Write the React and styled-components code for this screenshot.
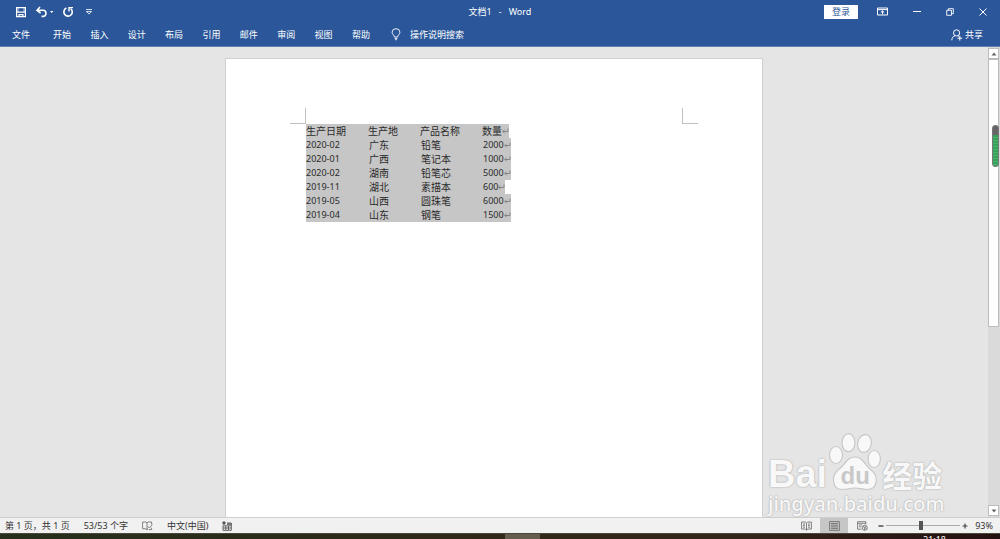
import { useState } from "react"
import styled, { createGlobalStyle } from "styled-components"

const GlobalStyle = createGlobalStyle`
    * {
        box-sizing: border-box;
    }
    body {
        margin: 0;
        overflow: hidden;
        font-family: "Noto Sans", "Noto Sans CJK SC", sans-serif;
        font-size: 9px;
    }
    button {
        border: none;
        padding: 0;
        background: none;
        color: inherit;
        font: inherit;
        display: flex;
        align-items: center;
        justify-content: center;
    }
    svg {
        display: block;
        fill: none;
        stroke: currentColor;
    }
`
const Window = styled.div`
    display: flex;
    flex-direction: column;
    height: 100vh;
`
const Header = styled.header`
    background-color: #2B579A;
    border-bottom: 1px solid #5F80B2;
    color: #FFF;
    flex: none;
`
const TitleBar = styled.div`
    display: grid;
    grid-template-columns: 1fr auto 1fr;
    align-items: center;
    height: 23px;
`
const QuickAccess = styled.div`
    display: flex;
    align-items: center;
    gap: 8px;
    padding-left: 15px;
    button:last-child {
        margin-left: 3px;
    }
`
const DocTitle = styled.h1`
    font-size: 9px;
    font-weight: 400;
    margin: 0;
    white-space: pre;
`
const WindowControls = styled.div`
    display: flex;
    align-items: center;
    justify-content: flex-end;
    gap: 25px;
    padding-right: 13px;
`
const LoginButton = styled.button`
    background-color: #FFF;
    color: #2B579A;
    width: 34px;
    height: 14px;
    margin-right: -6px;
`
const Ribbon = styled.div`
    display: flex;
    align-items: center;
    height: 23px;
    padding: 0 17px 0 12px;
`
const Tabs = styled.nav`
    display: flex;
    justify-content: space-between;
    width: 317px;
    margin-left: 23px;
`
const RibbonButton = styled.button`
    gap: ${({ $gap }) => $gap || 0}px;
    margin-left: ${({ $push }) => $push || "0"};
`
const Workspace = styled.main`
    display: flex;
    flex: 1;
    min-height: 0;
    background-color: #E5E5E5;
    position: relative;
`
const Canvas = styled.div`
    flex: 1;
    display: flex;
    justify-content: center;
    padding-top: 11px;
`
const Paper = styled.article`
    background-color: #FFF;
    border: 1px solid #D0D0D0;
    border-bottom: none;
    width: 100%;
    max-width: 538px;
    padding: 49px 64px 0 64px;
`
const Margins = styled.div`
    display: flex;
    justify-content: space-between;
`
const Corner = styled.div`
    width: 16px;
    height: 16px;
    border-bottom: 1px solid #C0C0C0;
    border-left: ${({ $side }) => ($side === "right" ? "1px solid #C0C0C0" : "none")};
    border-right: ${({ $side }) => ($side === "left" ? "1px solid #C0C0C0" : "none")};
`
const DataTable = styled.table`
    border-collapse: collapse;
    table-layout: fixed;
    margin-left: 16px;
    width: 240px;
    color: #2A2A2A;
    line-height: 14px;
`
const Cell = styled.td`
    background-color: ${({ $last }) => ($last ? "transparent" : "#C6C6C6")};
    font-size: ${({ $numeric }) => ($numeric ? 9 : 10)}px;
    font-weight: 400;
    height: 14px;
    padding: 0 0 0 ${({ $indent, $last }) => ($indent && !$last ? 1 : 0)}px;
    text-align: left;
    white-space: nowrap;
`
const Selected = styled.span`
    display: inline-flex;
    align-items: center;
    vertical-align: top;
    height: 14px;
    padding-left: ${({ $indent }) => ($indent ? 1 : 0)}px;
    background-color: #C6C6C6;
    svg {
        color: #777;
    }
`
const ScrollBar = styled.div`
    display: flex;
    flex-direction: column;
    width: 12px;
    padding: 1px 1px 1px 0;
    background-color: #DADADA;
    position: relative;
`
const ScrollButton = styled.button`
    background-color: #FFF;
    border: 1px solid #BCBCBC;
    height: 11px;
    flex: none;
    color: #666;
`
const Track = styled.div`
    flex: 1;
`
const ScrollThumb = styled.div`
    height: 60%;
    background-color: #FFF;
    border: 1px solid #BCBCBC;
`
const Meter = styled.div`
    position: absolute;
    top: 78px;
    right: 1px;
    width: 7px;
    height: 42px;
    border: 1px solid #777;
    border-radius: 3px;
    background:
        linear-gradient(#666 9px, transparent 9px),
        repeating-linear-gradient(#35A35B 0 2px, #4DB26A 2px 3px);
`
const Watermark = styled.div`
    position: absolute;
    right: 55px;
    bottom: 0;
    width: 177px;
    color: #F8F8F8;
    text-shadow: 0 0 2px #AAA, 0 0 1px #BBB;
`
const Brand = styled.div`
    display: flex;
    align-items: flex-end;
    height: 58px;
`
const BrandText = styled.span`
    font-family: ${({ $latin }) => ($latin ? '"Liberation Sans"' : '"Noto Sans CJK SC"')}, sans-serif;
    font-size: ${({ $size }) => $size}px;
    font-weight: 700;
    line-height: 34px;
`
const Paw = styled.div`
    position: relative;
    width: 52px;
    height: 58px;
    margin: 0 1px 0 2px;
    color: #C8C8C8;
    svg {
        fill: #F8F8F8;
    }
`
const PawText = styled.span`
    position: absolute;
    left: 0;
    right: 0;
    bottom: 3px;
    color: #C8C8C8;
    font-family: "Liberation Sans", sans-serif;
    font-size: 24px;
    font-weight: 700;
    line-height: 24px;
    text-align: center;
    text-shadow: none;
`
const Site = styled.div`
    font-family: "Noto Sans", sans-serif;
    font-size: 20px;
    font-weight: 500;
    line-height: 26px;
    white-space: nowrap;
`
const StatusBar = styled.footer`
    display: flex;
    align-items: center;
    flex: none;
    height: 16px;
    padding: 0 7px 0 5px;
    background-color: #F1F1F1;
    border-top: 1px solid #CFCFCF;
    color: #333;
    white-space: pre;
`
const StatusGroup = styled.div`
    display: flex;
    align-items: center;
    gap: 14px;
`
const ViewGroup = styled.div`
    display: flex;
    align-self: stretch;
    margin-left: auto;
`
const ViewButton = styled.button`
    width: 28px;
    height: 15px;
    color: #666;
    background-color: ${({ $active }) => ($active ? "#C6C6C6" : "transparent")};
`
const ZoomGroup = styled.div`
    display: flex;
    align-items: center;
    gap: 2px;
    margin-left: 2px;
`
const ZoomButton = styled.button`
    width: 6px;
    color: #444;
`
const ZoomSlider = styled.input`
    appearance: none;
    width: 74px;
    height: 10px;
    margin: 0;
    background: linear-gradient(#AAA, #AAA) center / 100% 1px no-repeat;
    &::-webkit-slider-thumb {
        appearance: none;
        width: 4px;
        height: 9px;
        background-color: #555;
    }
`
const ZoomValue = styled.span`
    margin-left: 5px;
`
const TaskBar = styled.div`
    display: flex;
    justify-content: flex-end;
    flex: none;
    height: 6px;
    overflow: hidden;
    background: linear-gradient(90deg, #25301C, #302818 50%, #33251B 75%, #241010);
    border-top: 1px solid #4A4A3C;
    color: #FFF;
`
const TaskItem = styled.div`
    width: 35px;
    margin-right: 383px;
    background-color: #655D4E;
`
const Clock = styled.time`
    line-height: 12px;
    margin-right: 54px;
`

const tabs = ["开始", "插入", "设计", "布局", "引用", "邮件", "审阅", "视图", "帮助"]
const columns = [
    { name: "生产日期", width: 62 },
    { name: "生产地", width: 52 },
    { name: "产品名称", width: 62 },
    { name: "数量", width: 64 },
]
const rows = [
    ["2020-02", "广东", "铅笔", "2000"],
    ["2020-01", "广西", "笔记本", "1000"],
    ["2020-02", "湖南", "铅笔芯", "5000"],
    ["2019-11", "湖北", "素描本", "600"],
    ["2019-05", "山西", "圆珠笔", "6000"],
    ["2019-04", "山东", "钢笔", "1500"],
]

function ReturnMark() {
    return (
        <svg width="7" height="8" viewBox="0 0 7 8" strokeWidth="0.8">
            <path d="M6 1.5V4.5H0.8M2.6 2.7L0.8 4.5L2.6 6.3" />
        </svg>
    )
}

function SaveIcon() {
    return (
        <svg width="12" height="12" viewBox="0 0 12 12" strokeWidth="1.2">
            <path d="M1.6 1.6H10.4V10.6H1.6ZM1.6 6.2H10.4M4 10.6V8.6H8V10.6" />
            <path d="M3 1.6V6M9 1.6V6" strokeWidth="0.7" />
        </svg>
    )
}

function UndoIcon() {
    return (
        <svg width="19" height="12" viewBox="0 0 19 12" strokeWidth="1.6">
            <path d="M5 1L2 4.3L5.6 7M2.4 4.3H8C12 4.3 12 10.4 8 10.4H6.6" />
            <path d="M15 5H18.4L16.7 7Z" fill="currentColor" stroke="none" />
        </svg>
    )
}

function RedoIcon() {
    return (
        <svg width="12" height="12" viewBox="0 0 12 12" strokeWidth="1.6">
            <path d="M4.4 2.1A4.2 4.2 0 1 0 8.6 2.6" />
            <path d="M7 5.6V1.6H11" strokeWidth="1.4" />
        </svg>
    )
}

function CustomizeIcon() {
    return (
        <svg width="8" height="8" viewBox="0 0 8 8" strokeWidth="0.8">
            <path d="M1 1.5H7M1.4 3.5H6.6L4 6Z" />
        </svg>
    )
}

function RibbonOptionsIcon() {
    return (
        <svg width="11" height="9" viewBox="0 0 11 9" strokeWidth="1">
            <path d="M0.5 1H10.5V8H0.5ZM0.5 2.6H10.5M5.5 7.4V4M3.8 5.5L5.5 3.9L7.2 5.5" />
        </svg>
    )
}

function MinimizeIcon() {
    return (
        <svg width="8" height="8" viewBox="0 0 8 8">
            <path d="M0 3.5H8" />
        </svg>
    )
}

function RestoreIcon() {
    return (
        <svg width="8" height="8" viewBox="0 0 8 8" strokeWidth="0.9">
            <path d="M0.7 2.3H5.5V7.3H0.7ZM2.3 2.3V0.7H7.3V5.7H5.5" />
        </svg>
    )
}

function CloseIcon() {
    return (
        <svg width="8" height="8" viewBox="0 0 8 8" strokeWidth="1">
            <path d="M0.5 0.5L7.5 7.5M7.5 0.5L0.5 7.5" />
        </svg>
    )
}

function BulbIcon() {
    return (
        <svg width="10" height="13" viewBox="0 0 10 13" strokeWidth="0.9">
            <path d="M3.4 9C3.4 7.2 1.1 6.4 1.1 4.2A3.9 3.5 0 0 1 8.9 4.2C8.9 6.4 6.6 7.2 6.6 9ZM3.6 10.4H6.4M4.1 11.7H5.9" />
        </svg>
    )
}

function ShareIcon() {
    return (
        <svg width="12" height="12" viewBox="0 0 12 12" strokeWidth="1">
            <circle cx="5.6" cy="3.9" r="3.1" />
            <path d="M0.8 11.3C0.9 8.6 2.2 7.2 4 6.7M7 6.7L8 7.3M8.8 6.8V11.6M6.4 9.2H11.2" />
        </svg>
    )
}

function ProofIcon() {
    return (
        <svg width="11" height="10" viewBox="0 0 11 10" strokeWidth="0.8" color="#666">
            <path d="M5 8.6L3.8 7.8H0.6V1H3.8L5 1.8V8.6ZM5 1.8L6.2 1H9.6V3.5M5 8.6L6 8M6 5.4L7.4 7L10.4 3.6M6.8 8.6H9.6V6.8" />
        </svg>
    )
}

function MacroIcon() {
    return (
        <svg width="10" height="10" viewBox="0 0 10 10" strokeWidth="0.9" color="#555">
            <path d="M1 4.5V9.3H9.3V2H5M1 4.8H9.3M3.8 5V9M6.5 5V9M1 7H9.3" />
            <circle cx="2" cy="2" r="1.7" fill="currentColor" stroke="none" />
            <path d="M5 3.1H9.3" strokeWidth="1.4" />
        </svg>
    )
}

function ReadIcon() {
    return (
        <svg width="11" height="10" viewBox="0 0 11 10" strokeWidth="0.8">
            <path d="M5.5 2L4.2 1H0.6V8H4.2L5.5 9.2L6.8 8H10.4V1H6.8L5.5 2V9M2 3H4M2 4.6H4M2 6.2H4M7 3H9M7 4.6H9M7 6.2H9" />
        </svg>
    )
}

function PrintIcon() {
    return (
        <svg width="11" height="10" viewBox="0 0 11 10" strokeWidth="0.8">
            <path d="M0.6 0.6H10.4V9.4H0.6ZM2 2.5H9M2 4.2H9M2 5.9H9M2 7.6H9" />
        </svg>
    )
}

function WebIcon() {
    return (
        <svg width="11" height="10" viewBox="0 0 11 10" strokeWidth="0.8">
            <path d="M4.6 8.2H0.6V0.7H8.8V3.4M0.6 2.3H8.8M2 4H5.2M2 5.8H4.4" />
            <circle cx="7.8" cy="6.8" r="2.5" />
            <path d="M6 5.6L8 6.4L9.6 8.4M7.4 9L8 6.4L9.4 5.4" />
        </svg>
    )
}

function Arrow({ up }) {
    return (
        <svg width="6" height="4" viewBox="0 0 6 4">
            <path d={up ? "M0.5 3.5L3 0.5L5.5 3.5Z" : "M0.5 0.5L3 3.5L5.5 0.5Z"} fill="currentColor" stroke="none" />
        </svg>
    )
}

function BaiduWatermark() {
    return (
        <Watermark>
            <Brand>
                <BrandText $latin $size={38}>Bai</BrandText>
                <Paw>
                    <svg width="52" height="58" viewBox="0 0 52 58" strokeWidth="1.2">
                        <ellipse cx="7" cy="22" rx="6.5" ry="8.5" />
                        <ellipse cx="19.5" cy="9.7" rx="6.5" ry="9" />
                        <ellipse cx="35.5" cy="10.5" rx="6.8" ry="9" transform="rotate(12 35.5 10.5)" />
                        <ellipse cx="45.2" cy="26" rx="6.2" ry="8.5" />
                        <path d="M26 24C34 24 36 32 42 37C50 43 49 56.500 38 56.500C32 56.500 31 55 26 55C20 55 19 56.500 13 56.500C3 56.500 2 43 9 37C16 32 18 24 26 24Z" />
                    </svg>
                    <PawText>du</PawText>
                </Paw>
                <BrandText $size={30}>经验</BrandText>
            </Brand>
            <Site>jingyan.baidu.com</Site>
        </Watermark>
    )
}

function ProductTable() {
    return (
        <DataTable>
            <colgroup>
                {columns.map(({ name, width }) => <col key={name} width={width} />)}
            </colgroup>
            <thead>
                <tr>
                    {columns.map(({ name }, i) => (
                        <Cell as="th" scope="col" key={name} $last={i === 3}>
                            {i === 3 ? <Selected>{name}<ReturnMark /></Selected> : name}
                        </Cell>
                    ))}
                </tr>
            </thead>
            <tbody>
                {rows.map((row, r) => (
                    <tr key={r}>
                        {row.map((value, i) => (
                            <Cell key={i} $last={i === 3} $numeric={i === 0 || i === 3} $indent={i > 0}>
                                {i === 3 ? <Selected $indent>{value}<ReturnMark /></Selected> : value}
                            </Cell>
                        ))}
                    </tr>
                ))}
            </tbody>
        </DataTable>
    )
}

function App() {
    const [zoom, setZoom] = useState(93)

    return (
        <Window>
            <GlobalStyle />
            <Header>
                <TitleBar>
                    <QuickAccess>
                        <button aria-label="保存"><SaveIcon /></button>
                        <button aria-label="撤消"><UndoIcon /></button>
                        <button aria-label="重复"><RedoIcon /></button>
                        <button aria-label="自定义"><CustomizeIcon /></button>
                    </QuickAccess>
                    <DocTitle>文档1   -   Word</DocTitle>
                    <WindowControls>
                        <LoginButton>登录</LoginButton>
                        <button aria-label="功能区显示选项"><RibbonOptionsIcon /></button>
                        <button aria-label="最小化"><MinimizeIcon /></button>
                        <button aria-label="还原"><RestoreIcon /></button>
                        <button aria-label="关闭"><CloseIcon /></button>
                    </WindowControls>
                </TitleBar>
                <Ribbon>
                    <RibbonButton>文件</RibbonButton>
                    <Tabs>
                        {tabs.map((tab) => <RibbonButton key={tab}>{tab}</RibbonButton>)}
                    </Tabs>
                    <RibbonButton $gap={9} $push="21px"><BulbIcon />操作说明搜索</RibbonButton>
                    <RibbonButton $gap={2} $push="auto"><ShareIcon />共享</RibbonButton>
                </Ribbon>
            </Header>
            <Workspace>
                <Canvas>
                    <Paper>
                        <Margins>
                            <Corner $side="left" />
                            <Corner $side="right" />
                        </Margins>
                        <ProductTable />
                    </Paper>
                </Canvas>
                <ScrollBar>
                    <ScrollButton aria-label="向上滚动"><Arrow up /></ScrollButton>
                    <Track><ScrollThumb /></Track>
                    <ScrollButton aria-label="向下滚动"><Arrow /></ScrollButton>
                    <Meter />
                </ScrollBar>
                <BaiduWatermark />
            </Workspace>
            <StatusBar>
                <StatusGroup>
                    <span>第 1 页，共 1 页</span>
                    <span>53/53 个字</span>
                    <ProofIcon />
                    <span>中文(中国)</span>
                    <MacroIcon />
                </StatusGroup>
                <ViewGroup>
                    <ViewButton aria-label="阅读视图"><ReadIcon /></ViewButton>
                    <ViewButton aria-label="页面视图" $active><PrintIcon /></ViewButton>
                    <ViewButton aria-label="Web 版式视图"><WebIcon /></ViewButton>
                </ViewGroup>
                <ZoomGroup>
                    <ZoomButton aria-label="缩小" onClick={() => setZoom(zoom - 10)}>
                        <svg width="6" height="6" viewBox="0 0 6 6"><path d="M0.5 3H5.5" strokeWidth="1.4" /></svg>
                    </ZoomButton>
                    <ZoomSlider
                        type="range"
                        aria-label="显示比例"
                        min="0"
                        max="200"
                        value={zoom}
                        onChange={(e) => setZoom(Number(e.target.value))}
                    />
                    <ZoomButton aria-label="放大" onClick={() => setZoom(zoom + 10)}>
                        <svg width="6" height="6" viewBox="0 0 6 6"><path d="M0.5 3H5.5M3 0.5V5.5" strokeWidth="1.2" /></svg>
                    </ZoomButton>
                    <ZoomValue>{zoom}%</ZoomValue>
                </ZoomGroup>
            </StatusBar>
            <TaskBar>
                <TaskItem />
                <Clock>21:18</Clock>
            </TaskBar>
        </Window>
    )
}

export default App
